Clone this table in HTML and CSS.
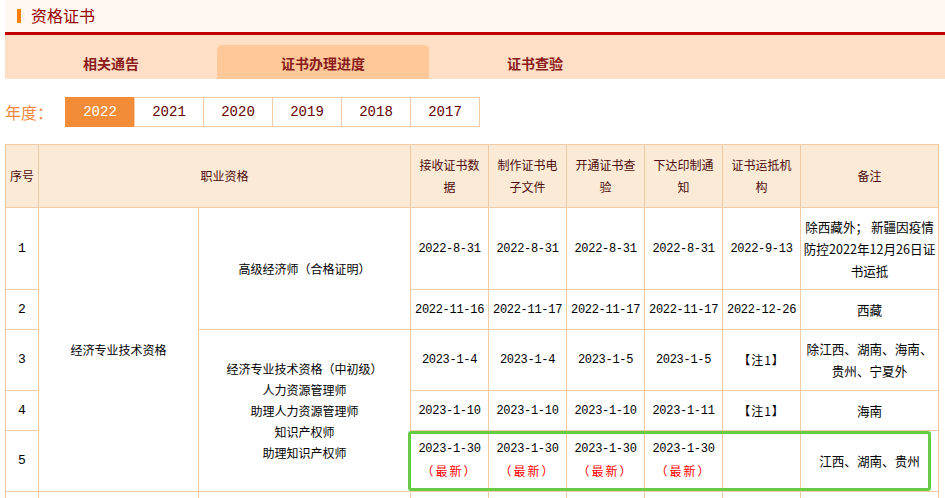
FILE: index.html
```html
<!DOCTYPE html>
<html lang="zh-CN">
<head>
<meta charset="utf-8">
<title>资格证书</title>
<link rel="stylesheet" href="styles.css">
</head>
<body>
<div class="page">
  <div class="title-bar">
    <span class="title-mark"></span>
    <h1 class="title">资格证书</h1>
  </div>
  <nav class="tabs">
    <a class="tab">相关通告</a>
    <a class="tab active">证书办理进度</a>
    <a class="tab">证书查验</a>
  </nav>
  <div class="years">
    <span class="years-label">年度：</span>
    <ul class="year-list">
      <li class="year active">2022</li>
      <li class="year">2021</li>
      <li class="year">2020</li>
      <li class="year">2019</li>
      <li class="year">2018</li>
      <li class="year">2017</li>
    </ul>
  </div>
  <div class="table-wrap">
    <table class="progress">
      <colgroup>
        <col class="c-no">
        <col class="c-cat">
        <col class="c-name">
        <col class="c-date">
        <col class="c-date">
        <col class="c-date">
        <col class="c-date">
        <col class="c-date">
        <col class="c-note">
      </colgroup>
      <thead>
        <tr class="r-head">
          <th>序号</th>
          <th colspan="2">职业资格</th>
          <th>接收证书数据</th>
          <th>制作证书电子文件</th>
          <th>开通证书查验</th>
          <th>下达印制通知</th>
          <th>证书运抵机构</th>
          <th>备注</th>
        </tr>
      </thead>
      <tbody>
        <tr class="r-tall">
          <td class="num">1</td>
          <td rowspan="5">经济专业技术资格</td>
          <td rowspan="2">高级经济师（合格证明）</td>
          <td class="d">2022-8-31</td>
          <td class="d">2022-8-31</td>
          <td class="d">2022-8-31</td>
          <td class="d">2022-8-31</td>
          <td class="d">2022-9-13</td>
          <td class="note">除西藏外；&nbsp;新疆因疫情<br>防控2022年12月26日证<br>书运抵</td>
        </tr>
        <tr class="r-short">
          <td class="num">2</td>
          <td class="d">2022-11-16</td>
          <td class="d">2022-11-17</td>
          <td class="d">2022-11-17</td>
          <td class="d">2022-11-17</td>
          <td class="d">2022-12-26</td>
          <td class="note">西藏</td>
        </tr>
        <tr class="r-mid">
          <td class="num">3</td>
          <td rowspan="3" class="quals">经济专业技术资格（中初级）<br>人力资源管理师<br>助理人力资源管理师<br>知识产权师<br>助理知识产权师</td>
          <td class="d">2023-1-4</td>
          <td class="d">2023-1-4</td>
          <td class="d">2023-1-5</td>
          <td class="d">2023-1-5</td>
          <td class="ref">【注1】</td>
          <td class="note">除江西、湖南、海南、<br>贵州、宁夏外</td>
        </tr>
        <tr class="r-short">
          <td class="num">4</td>
          <td class="d">2023-1-10</td>
          <td class="d">2023-1-10</td>
          <td class="d">2023-1-10</td>
          <td class="d">2023-1-11</td>
          <td class="ref">【注1】</td>
          <td class="note">海南</td>
        </tr>
        <tr class="r-mid">
          <td class="num">5</td>
          <td class="d">2023-1-30<br><span class="new">（最新）</span></td>
          <td class="d">2023-1-30<br><span class="new">（最新）</span></td>
          <td class="d">2023-1-30<br><span class="new">（最新）</span></td>
          <td class="d">2023-1-30<br><span class="new">（最新）</span></td>
          <td></td>
          <td class="note">江西、湖南、贵州</td>
        </tr>
        <tr class="r-short">
          <td></td>
          <td></td>
          <td></td>
          <td></td>
          <td></td>
          <td></td>
          <td></td>
          <td></td>
          <td></td>
        </tr>
      </tbody>
    </table>
    <div class="highlight"></div>
  </div>
</div>
</body>
</html>
```

FILE: styles.css
```css
html, body {
  margin: 0;
  padding: 0;
  overflow: hidden;
  background: #ffffff;
}

body {
  font-family: "Noto Sans CJK SC", "Liberation Sans", sans-serif;
  color: #000;
  text-spacing-trim: space-all;
}

.page {
  padding-left: 5px;
}

.title-bar {
  display: flex;
  align-items: center;
  box-sizing: border-box;
  height: 35px;
  padding-left: 12px;
  background: #fff7f2;
  border-bottom: 3px solid #c00000;
}

.title-mark {
  display: block;
  width: 4px;
  height: 14px;
  background: #ff8000;
  margin-right: 10px;
}

.title {
  margin: 0 0 2px 0;
  font-size: 16px;
  font-weight: normal;
  line-height: 20px;
  color: #990000;
}

.tabs {
  display: flex;
  height: 44px;
  background: #ffdfc6;
}

.tab {
  display: block;
  width: 212px;
  height: 34px;
  margin-top: 10px;
  padding-top: 8px;
  box-sizing: border-box;
  text-align: center;
  font-size: 14px;
  font-weight: bold;
  line-height: 20px;
  color: #8b1c1c;
  border-radius: 5px 5px 0 0;
}

.tab.active {
  background: #ffc899;
}

.years {
  display: flex;
  align-items: center;
  margin-top: 18px;
}

.years-label {
  width: 60px;
  font-size: 16px;
  line-height: 20px;
  color: #f0883c;
}

.year-list {
  display: flex;
  margin: 0;
  padding: 0;
  list-style: none;
}

.year {
  width: 70px;
  height: 30px;
  box-sizing: border-box;
  margin-right: -1px;
  border: 1px solid #f5cba7;
  text-align: center;
  font-family: "Liberation Mono", monospace;
  font-size: 14px;
  line-height: 28px;
  color: #660000;
  background: #fff;
}

.year.active {
  background: #f28c38;
  border-color: #f28c38;
  color: #fff;
}

.table-wrap {
  position: relative;
  margin-top: 17px;
  width: 934px;
}

.progress {
  width: 934px;
  table-layout: fixed;
  border-collapse: collapse;
  font-size: 12px;
  line-height: 22px;
}

.c-no { width: 33px; }
.c-cat { width: 160px; }
.c-name { width: 212px; }
.c-date { width: 78px; }
.c-note { width: 138px; }

.progress th,
.progress td {
  border: 1px solid #f2cba5;
  padding: 0 4px;
  text-align: center;
  vertical-align: middle;
}

.progress th {
  background: #faead6;
  font-weight: normal;
  color: #4f0b0b;
}

.progress .note {
  padding: 0;
  font-size: 12.6px;
  white-space: nowrap;
}

.r-head { height: 63px; }
.r-tall { height: 82px; }
.r-short { height: 40px; }
.r-mid { height: 61px; }

.progress .num {
  font-family: "Liberation Mono", monospace;
  font-size: 13px;
}

.progress .d {
  font-family: "Liberation Mono", monospace;
  font-size: 12px;
  letter-spacing: -0.3px;
  white-space: nowrap;
}

.progress .ref {
  white-space: nowrap;
  letter-spacing: 1px;
}

.new {
  font-family: "Noto Sans CJK SC", sans-serif;
  font-size: 12px;
  letter-spacing: 2px;
  color: #ff0000;
}

.progress .quals {
  line-height: 21px;
}

.highlight {
  position: absolute;
  left: 403px;
  top: 287px;
  width: 523px;
  height: 60px;
  box-sizing: border-box;
  border: 3px solid #66cc44;
  border-radius: 3px;
  pointer-events: none;
}
```
